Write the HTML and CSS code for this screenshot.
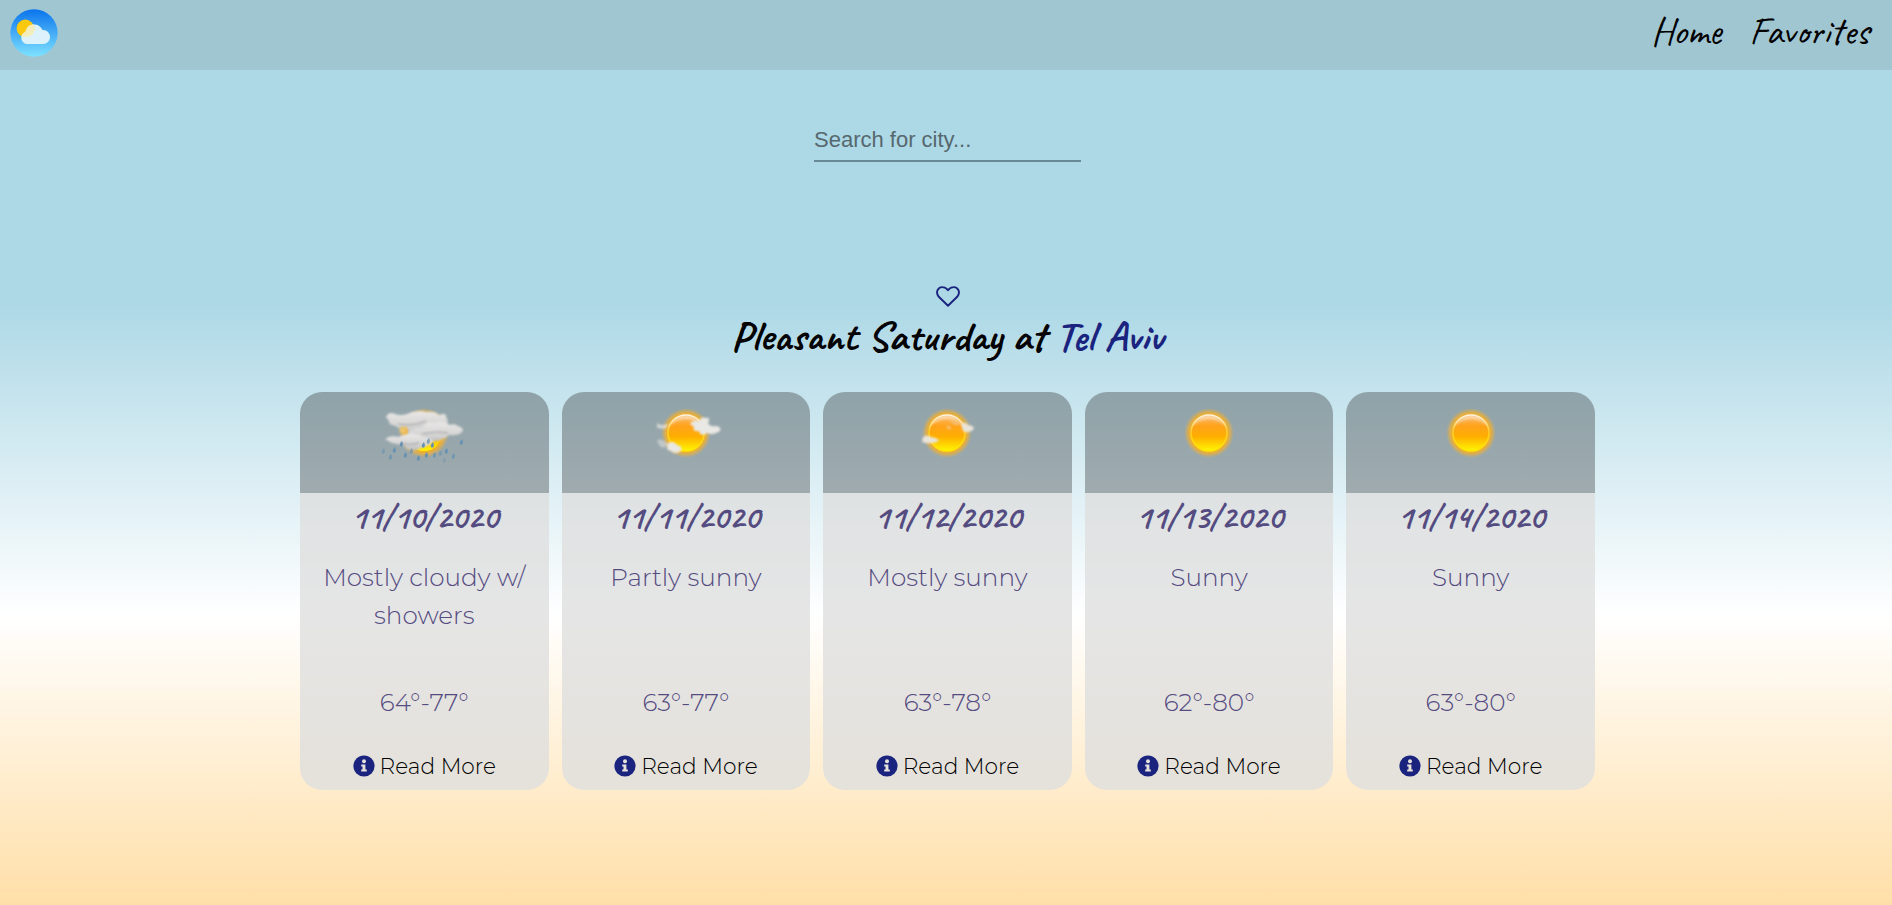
FILE: index.html
```html
<!DOCTYPE html>
<html lang="en">
<head>
<meta charset="utf-8">
<title>Weather</title>
<link rel="stylesheet" href="styles.css">
</head>
<body>
<svg class="defs" width="0" height="0" aria-hidden="true">
  <defs>
    <linearGradient id="sky" x1="0" y1="0" x2="0" y2="1"><stop offset="0" stop-color="#0b74ed"/><stop offset="1" stop-color="#7ee2ff"/></linearGradient>
    <linearGradient id="orb" x1="0" y1="0" x2="0" y2="1"><stop offset="0" stop-color="#f9bd78"/><stop offset=".3" stop-color="#ffa21b"/><stop offset=".6" stop-color="#ffae00"/><stop offset="1" stop-color="#fff600"/></linearGradient>
    <linearGradient id="rim" x1="0" y1="0" x2="0" y2="1"><stop offset="0" stop-color="#fff1dc"/><stop offset=".45" stop-color="#ffc928"/><stop offset="1" stop-color="#ffe800"/></linearGradient>
    <radialGradient id="glow"><stop offset=".7" stop-color="#ffae12"/><stop offset=".82" stop-color="#f5b02a" stop-opacity=".75"/><stop offset="1" stop-color="#e8b040" stop-opacity="0"/></radialGradient>
    <linearGradient id="puff" x1="0" y1="0" x2="0" y2="1"><stop offset="0" stop-color="#e9e8e7"/><stop offset=".7" stop-color="#d2d1d1"/><stop offset="1" stop-color="#b4b4b6"/></linearGradient>
    <filter id="soft" x="-20%" y="-20%" width="140%" height="140%"><feGaussianBlur stdDeviation=".8"/></filter>
    <g id="sun"><circle cx="50" cy="38" r="25" fill="url(#glow)"/><circle cx="50" cy="38" r="18" fill="url(#orb)" stroke="url(#rim)" stroke-width="1.6"/><path d="M34 31Q38 21 50 20.500Q62 21 66 31Q59 24 50 24Q41 24 34 31Z" fill="#fff" opacity=".45" filter="url(#soft)"/></g>
    <path id="drop" d="M1-3Q-2 0-1 2Q0 3.500 1.500 2Q2.500 0 1-3Z"/>
    <g id="info"><circle cx="11" cy="11" r="10.600" fill="#1a237e"/><circle cx="11" cy="6.200" r="2" fill="#e6e1da"/><path d="M8.200 9.400h4.200v5.200h1.400v2H8.200v-2h1.300v-3.200H8.200z" fill="#e6e1da"/></g>
  </defs>
</svg>
<header class="navbar">
  <svg class="logo" viewBox="0 0 48 48"><circle cx="24" cy="24" r="23.700" fill="url(#sky)"/><circle cx="15.300" cy="19.300" r="8.700" fill="#ffc90b"/><path d="M17 35a6.300 6.300 0 0 1-5.800-6.300c0-3 2-5 4.400-5.800C16.500 18 20 15.500 24 15.500c4 0 7 2 8.500 5.500 4-.5 7.500 3 7.500 7 0 4-3 7-7 7z" fill="#e2f4fb" opacity=".96"/><path d="M15.600 22.900C16.500 18 20 15.500 24 15.600A8.700 8.700 0 0 1 16 28Q13 28 11.500 27Q12.500 24 15.600 22.900Z" fill="#f3ecbd"/></svg>
  <nav class="links"><a class="link">Home</a><a class="link">Favorites</a></nav>
</header>
<main class="content">
  <input class="search" type="text" placeholder="Search for city...">
  <svg class="heart" viewBox="0 0 24 21"><path d="M12 19.800L2.800 10.800C-1.500 5.200 3.200.8 6.500 1.100C9.300 1.200 10.800 2.600 12 4.200C13.200 2.600 14.700 1.200 17.500 1.100C20.800.8 25.500 5.200 21.200 10.800Z" fill="none" stroke="#1a237e" stroke-width="1.900" stroke-linejoin="round"/></svg>
  <h1 class="title">Pleasant Saturday at <span class="city">Tel Aviv</span></h1>
  <section class="cards">
    <article class="card">
      <div class="sky"><svg class="weather" viewBox="0 0 100 70"><circle cx="50" cy="38" r="25" fill="url(#glow)"/><circle cx="50" cy="38" r="18" fill="url(#orb)"/>
        <g filter="url(#soft)" fill="url(#puff)"><path d="M12 22Q15 16 21 19Q27 21 33 19Q42 14 53 17Q61 16 65 20Q73 17 72 22Q76 27 71 31L71 38 32 40Q35 36 32 32Q24 35 22 31Q14 30 15 26Z"/><path d="M34 38Q38 33 48 33Q53 26 61 28Q70 25 76 30Q80 28 84 31Q91 33 88 37Q84 41 75 40Q67 47 60 46Q46 50 36 45Z"/><path d="M11 44Q16 40 24 42Q32 38 39 39Q52 41 60 46Q56 51 47 53Q40 58 33 54L30 50Q20 49 16 47Z"/></g>
        <path d="M24 29Q38 32 52 26M48 39Q62 36 74 38M26 48Q36 51 45 48" fill="none" stroke="#b2b1b2" stroke-width="1.600" filter="url(#soft)"/><circle cx="29" cy="35" r="3.600" fill="#edc46b" filter="url(#soft)"/>
        <g fill="#6791b3"><use href="#drop" x="27" y="49"/><use href="#drop" x="20" y="55"/><use href="#drop" x="9" y="56" opacity=".6"/><use href="#drop" x="16" y="62" opacity=".8"/><use href="#drop" x="31" y="60"/><use href="#drop" x="37" y="56" opacity=".7"/><use href="#drop" x="44" y="63"/><use href="#drop" x="49" y="50"/><use href="#drop" x="54" y="46" opacity=".8"/><use href="#drop" x="58" y="50"/><use href="#drop" x="52" y="60"/><use href="#drop" x="60" y="60" opacity=".8"/><use href="#drop" x="66" y="58" opacity=".6"/><use href="#drop" x="72" y="56"/><use href="#drop" x="79" y="61" opacity=".8"/><use href="#drop" x="87" y="47"/><use href="#drop" x="70" y="65" opacity=".4"/></g></svg></div>
      <div class="body"><h2 class="date">11/10/2020</h2><p class="summary">Mostly cloudy w/ showers</p><p class="temps">64°-77°</p>
      <a class="more"><svg class="info" viewBox="0 0 22 22"><use href="#info"/></svg>Read More</a></div>
    </article>
    <article class="card">
      <div class="sky"><svg class="weather" viewBox="0 0 100 70"><use href="#sun"/><g fill="#e9e8e4" filter="url(#soft)"><path d="M54 29Q57 24 63 26Q65 21 70 23Q75 22 72 28Q74 32 80 31Q86 32 84 36Q77 41 71 38Q65 43 63 36Q56 37 58 32Z"/><path d="M32 48Q38 45 41 50Q47 51 45 56Q39 60 35 56Q29 55 32 48Z"/><path d="M21 28L25 30 33 29 29 34 21 33Z" opacity=".7"/><path d="M21 45Q27 43 32 49L28 53Q23 53 21 45Z" opacity=".5"/></g></svg></div>
      <div class="body"><h2 class="date">11/11/2020</h2><p class="summary">Partly sunny</p><p class="temps">63°-77°</p>
      <a class="more"><svg class="info" viewBox="0 0 22 22"><use href="#info"/></svg>Read More</a></div>
    </article>
    <article class="card">
      <div class="sky"><svg class="weather" viewBox="0 0 100 70"><use href="#sun"/><g fill="#e9e4da" filter="url(#soft)"><path d="M64 29Q68 26 71 30Q79 31 76 35Q70 39 66 36Z"/><path d="M26 42Q30 39 34 42Q41 43 42 46Q34 50 25 47Z"/><path d="M52 25Q57 27 65 29L58 30Z M49 31L54 31 53 35 50 33Z" opacity=".5"/></g></svg></div>
      <div class="body"><h2 class="date">11/12/2020</h2><p class="summary">Mostly sunny</p><p class="temps">63°-78°</p>
      <a class="more"><svg class="info" viewBox="0 0 22 22"><use href="#info"/></svg>Read More</a></div>
    </article>
    <article class="card">
      <div class="sky"><svg class="weather" viewBox="0 0 100 70"><use href="#sun"/></svg></div>
      <div class="body"><h2 class="date">11/13/2020</h2><p class="summary">Sunny</p><p class="temps">62°-80°</p>
      <a class="more"><svg class="info" viewBox="0 0 22 22"><use href="#info"/></svg>Read More</a></div>
    </article>
    <article class="card">
      <div class="sky"><svg class="weather" viewBox="0 0 100 70"><use href="#sun"/></svg></div>
      <div class="body"><h2 class="date">11/14/2020</h2><p class="summary">Sunny</p><p class="temps">63°-80°</p>
      <a class="more"><svg class="info" viewBox="0 0 22 22"><use href="#info"/></svg>Read More</a></div>
    </article>
  </section>
</main>
</body>
</html>
```
FILE: styles.css
```css
* { box-sizing: border-box; }
body {
  margin: 0;
  height: 905px;
  overflow: hidden;
  background: linear-gradient(180deg, #add8e6 0, #add8e6 33.5%, #fff 68%, #ffdfa8 100%);
  font-family: Montserrat, Inter, sans-serif;
  font-weight: 300;
}
.defs { position: absolute; }
.navbar {
  height: 70px;
  padding: 9px 23px 0 10px;
  display: flex;
  justify-content: space-between;
  background: #a0c6d2;
}
.logo { width: 48px; height: 48px; }
.links { display: flex; gap: 28px; }
.link, .title, .date { font-family: Caveat, Lato, cursive; }
.link { font-size: 39px; line-height: 46px; font-weight: 400; color: #000; white-space: nowrap; }
.content { display: flex; flex-direction: column; align-items: center; padding-left: 3px; }
.search {
  margin-top: 48px;
  width: 267px;
  height: 44px;
  padding: 2px 0 0;
  border: 0;
  border-bottom: 2px solid #688a96;
  background: transparent;
  font: 22px "Liberation Sans", Arial, sans-serif;
  color: #56686e;
}
.search::placeholder { color: #56686e; opacity: 1; }
.heart { width: 24px; height: 21px; margin-top: 124px; }
.title {
  margin: 2px 0 0;
  width: 433px;
  height: 56px;
  font-size: 42.6px;
  line-height: 54px;
  font-weight: 700;
  white-space: nowrap;
  color: #000;
}
.city { color: #1a237e; }
.cards {
  margin-top: 27px;
  width: 1295px;
  display: grid;
  grid-template-columns: repeat(5, 1fr);
  gap: 13px;
}
.card {
  height: 398px;
  border-radius: 22px;
  overflow: hidden;
  color: #544b80;
  text-align: center;
}
.sky {
  height: 101px;
  display: flex;
  justify-content: center;
  background: rgba(43, 43, 43, .35);
}
.weather { width: 100px; height: 70px; margin-top: 3px; }
.body {
  height: 297px;
  display: flex;
  flex-direction: column;
  align-items: center;
  background: rgba(222, 222, 222, .8);
}
.date { margin: 0; height: 50px; line-height: 47px; font-size: 34.6px; font-weight: 700; }
.summary { margin: 15px 0 0; width: 218px; height: 108px; font-size: 24.7px; line-height: 38px; }
.temps { margin: 17px 0 0; height: 38px; font-size: 24.7px; line-height: 38px; }
.more { margin-top: 26px; display: flex; align-items: center; gap: 5px; height: 38px; font-size: 21.7px; color: #000; }
.info { width: 22px; height: 22px; }
```
